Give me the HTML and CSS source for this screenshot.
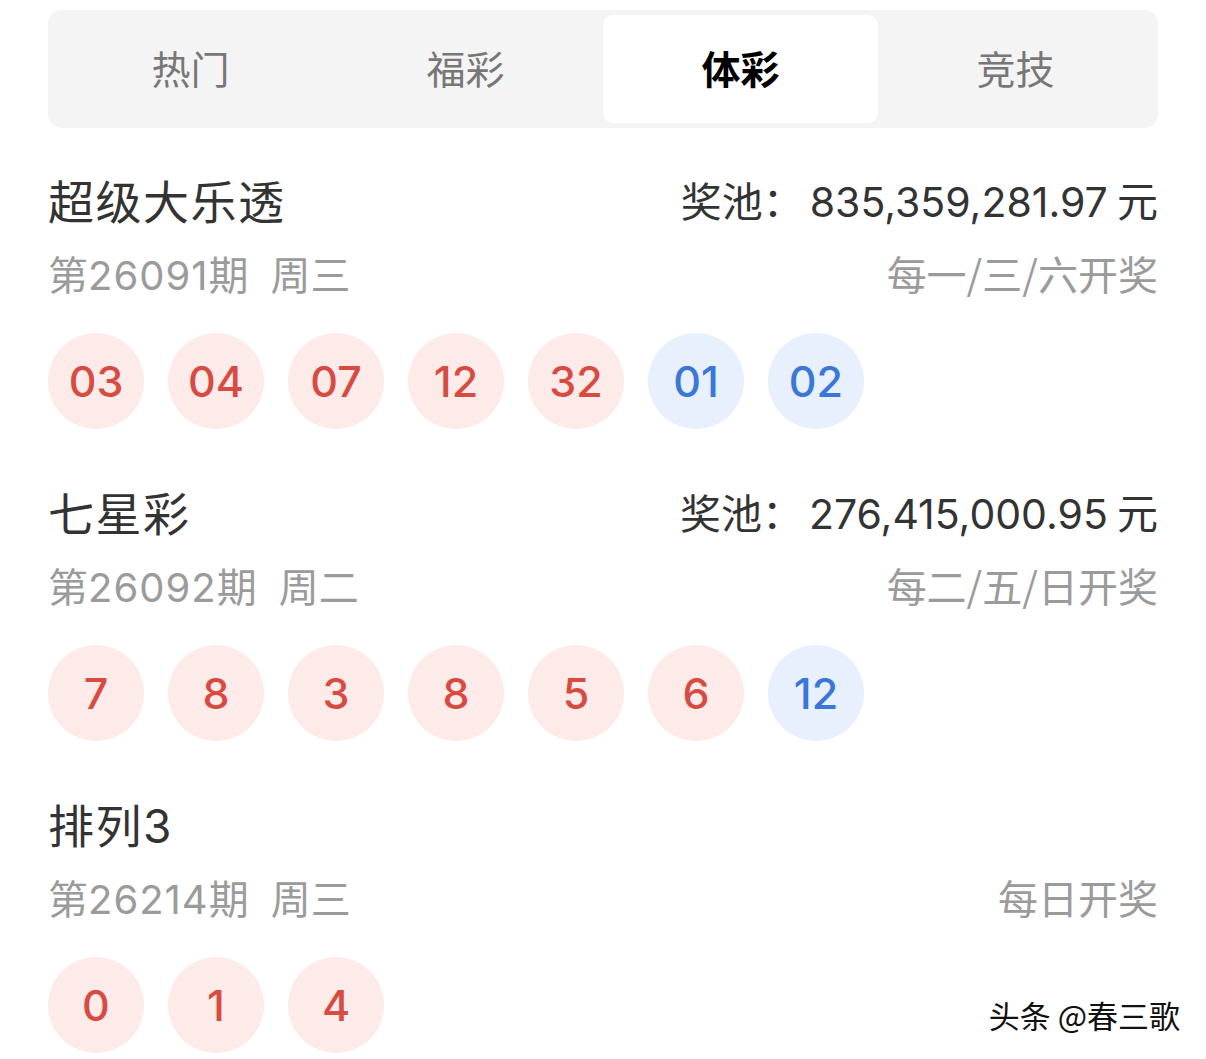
FILE: index.html
```html
<!DOCTYPE html>
<html lang="zh">
<head>
<meta charset="utf-8">
<link rel="stylesheet" href="styles.css">
</head>
<body>
<div class="page">
  <div class="tabs">
    <div class="tab">热门</div>
    <div class="tab">福彩</div>
    <div class="tab active">体彩</div>
    <div class="tab">竞技</div>
  </div>

  <div class="section">
    <div class="row title-row">
      <div class="title">超级大乐透</div>
      <div class="pool">奖池：<span class="num">835,359,281.97</span> 元</div>
    </div>
    <div class="row sub-row">
      <div class="issue">第<span class="num">26091</span>期<span class="gap"></span>周三</div>
      <div class="schedule">每一/三/六开奖</div>
    </div>
    <div class="balls">
      <div class="ball red">03</div>
      <div class="ball red">04</div>
      <div class="ball red">07</div>
      <div class="ball red">12</div>
      <div class="ball red">32</div>
      <div class="ball blue">01</div>
      <div class="ball blue">02</div>
    </div>
  </div>

  <div class="section">
    <div class="row title-row">
      <div class="title">七星彩</div>
      <div class="pool">奖池：<span class="num">276,415,000.95</span> 元</div>
    </div>
    <div class="row sub-row">
      <div class="issue">第<span class="num">26092</span>期<span class="gap"></span>周二</div>
      <div class="schedule">每二/五/日开奖</div>
    </div>
    <div class="balls">
      <div class="ball red">7</div>
      <div class="ball red">8</div>
      <div class="ball red">3</div>
      <div class="ball red">8</div>
      <div class="ball red">5</div>
      <div class="ball red">6</div>
      <div class="ball blue">12</div>
    </div>
  </div>

  <div class="section">
    <div class="row title-row">
      <div class="title">排列<span class="num">3</span></div>
    </div>
    <div class="row sub-row">
      <div class="issue">第<span class="num">26214</span>期<span class="gap"></span>周三</div>
      <div class="schedule">每日开奖</div>
    </div>
    <div class="balls">
      <div class="ball red">0</div>
      <div class="ball red">1</div>
      <div class="ball red">4</div>
    </div>
  </div>

  <div class="watermark">头条 @春三歌</div>
</div>
</body>
</html>
```

FILE: styles.css
```css
html, body {
  margin: 0;
  padding: 0;
  background: #ffffff;
}
body {
  font-family: "Noto Sans CJK SC", "Noto Sans", sans-serif;
  color: #333333;
}
.page {
  position: relative;
  width: 1206px;
  height: 1059px;
  overflow: hidden;
  box-sizing: border-box;
  padding: 10px 48px 0 48px;
}
.num {
  font-family: Inter, "Noto Sans CJK SC", sans-serif;
}
.tabs {
  display: grid;
  grid-template-columns: repeat(4, 1fr);
  background: #f4f4f4;
  border-radius: 14px;
  padding: 5px;
  height: 118px;
  box-sizing: border-box;
}
.tab {
  display: flex;
  align-items: center;
  justify-content: center;
  font-size: 39px;
  color: #777777;
  border-radius: 10px;
  padding-bottom: 4px;
}
.tab.active {
  background: #ffffff;
  color: #000000;
  font-weight: 700;
}
.section {
  margin-top: 41px;
}
.section + .section {
  margin-top: 52px;
}
.row {
  display: flex;
  justify-content: space-between;
  align-items: center;
}
.title-row {
  height: 60px;
}
.title {
  font-size: 46px;
  color: #333333;
  letter-spacing: 1.5px;
}
.pool {
  font-size: 41px;
  color: #333333;
}
.pool .num {
  font-size: 41px;
  margin-left: 6px;
}
.sub-row {
  margin-top: 14px;
  height: 60px;
}
.issue, .schedule {
  font-size: 40px;
  color: #9b9b9b;
}
.issue .num {
  font-size: 40px;
  letter-spacing: 1px;
}
.gap {
  display: inline-block;
  width: 22px;
}
.balls {
  display: flex;
  gap: 24px;
  margin-top: 30px;
}
.ball {
  width: 96px;
  height: 96px;
  border-radius: 50%;
  display: flex;
  align-items: center;
  justify-content: center;
  font-family: Inter, "Noto Sans", sans-serif;
  font-size: 43px;
  font-weight: 500;
}
.ball.red {
  background: #fdebea;
  color: #d84b43;
}
.ball.blue {
  background: #e7f0fc;
  color: #3a77d6;
}
.watermark {
  position: absolute;
  right: 26px;
  bottom: 22px;
  font-size: 31px;
  color: #111111;
  text-shadow: 1px 1px 0 #ffffff, -1px -1px 0 #ffffff, 1px -1px 0 #ffffff;
}
```
